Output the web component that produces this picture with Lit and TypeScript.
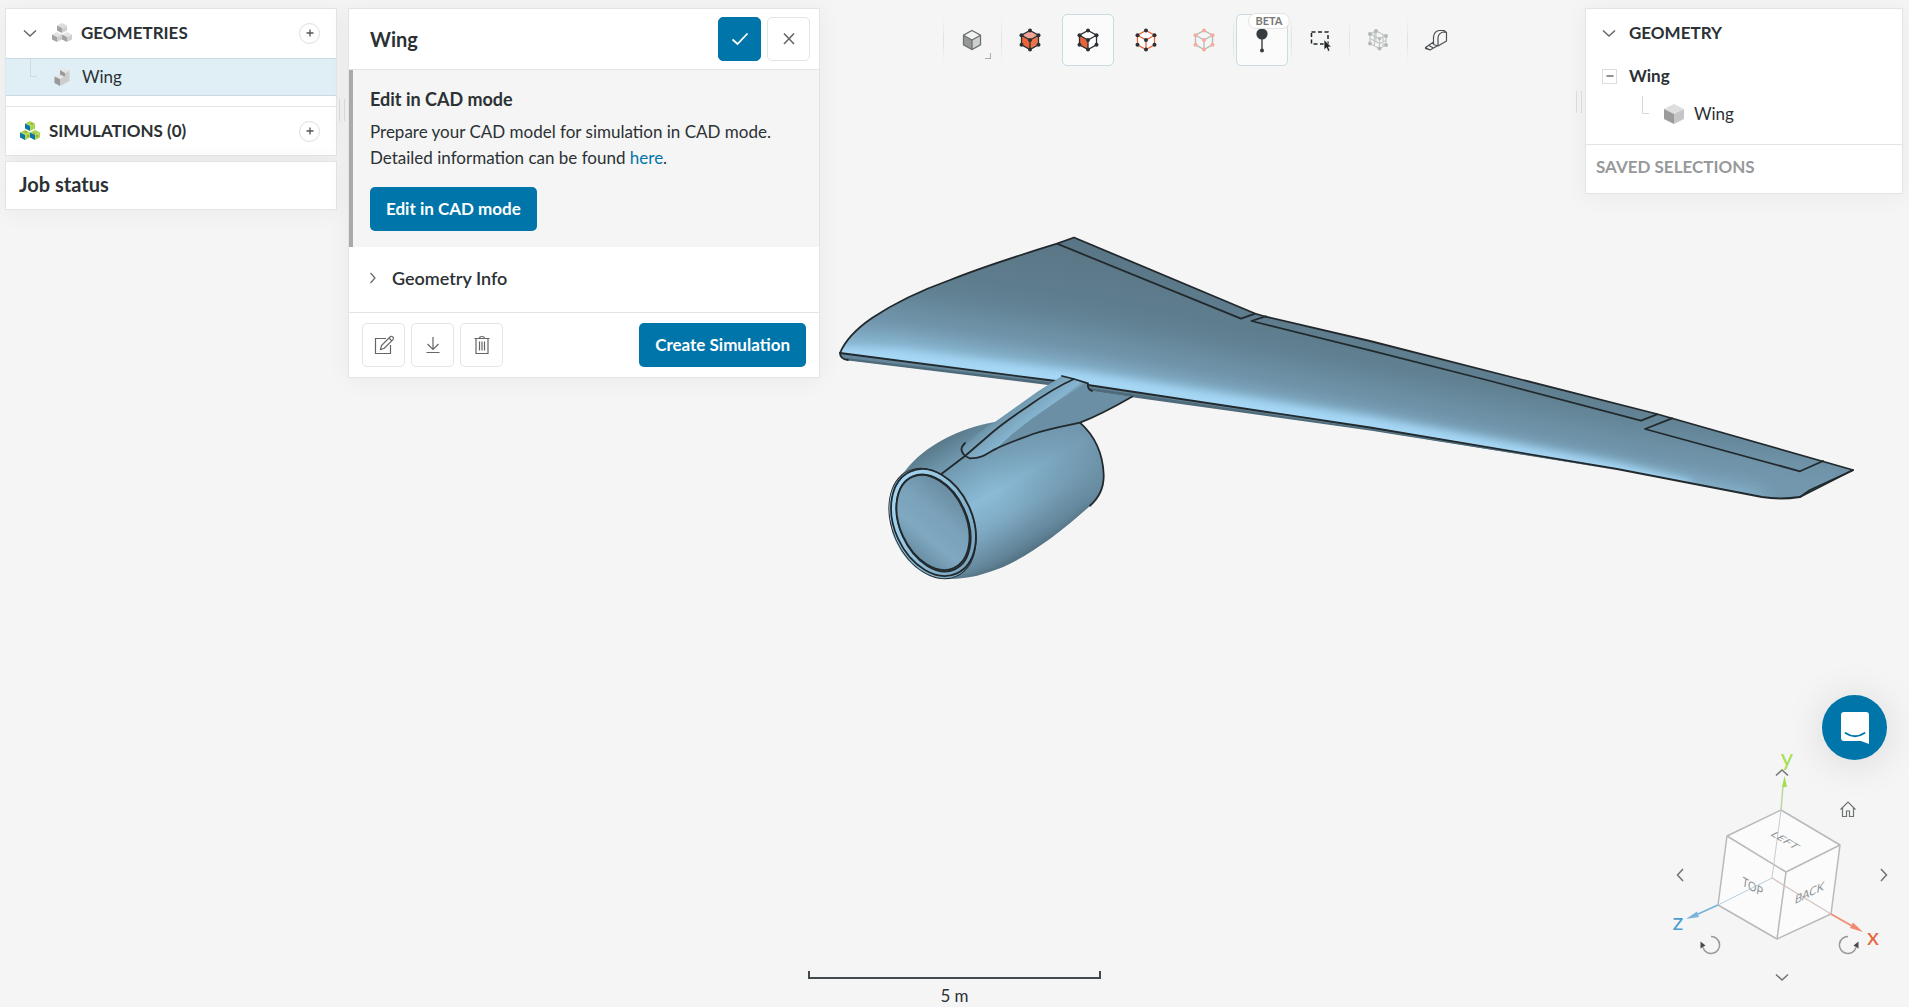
import { LitElement, html, css, svg, nothing } from "lit";
import { customElement, property } from "lit/decorators.js";

const isoCube = (cx: number, cy: number, s: number, top: string, left: string, right: string) => {
  const h = s / 2;
  return svg`
    <path fill=${top} d="M${cx} ${cy - s}L${cx + s} ${cy - h}L${cx} ${cy}L${cx - s} ${cy - h}Z"/>
    <path fill=${left} d="M${cx - s} ${cy - h}L${cx} ${cy}V${cy + s}L${cx - s} ${cy + h}Z"/>
    <path fill=${right} d="M${cx + s} ${cy - h}L${cx} ${cy}V${cy + s}L${cx + s} ${cy + h}Z"/>`;
};

const cubeDots = [[12, 2.5], [20.5, 7.2], [20.5, 16.8], [12, 21.5], [3.5, 16.8], [3.5, 7.2], [12, 12]];

const toolCube = (top: string, left: string, right: string, edge: string, dot: string) => svg`
  <g stroke="none">
    <path fill=${top} d="M12 2.5L20.5 7.2L12 12L3.5 7.2Z"/>
    <path fill=${left} d="M3.5 7.2L12 12V21.5L3.5 16.8Z"/>
    <path fill=${right} d="M20.5 7.2L12 12V21.5L20.5 16.8Z"/>
  </g>
  <path fill="none" stroke=${edge} stroke-width="1.3" d="M12 2.5L20.5 7.2V16.8L12 21.5L3.5 16.8V7.2ZM3.5 7.2L12 12L20.5 7.2M12 12V21.5"/>
  ${dot ? cubeDots.map(([x, y]) => svg`<circle cx=${x} cy=${y} r="2" stroke="none" fill=${dot}/>`) : nothing}`;

const glyphs: Record<string, unknown> = {
  down: svg`<path stroke-width="1.500" d="M6 9.500L12 15L18 9.500"/>`,
  up: svg`<path stroke-width="1.500" d="M6 14.500L12 9L18 14.500"/>`,
  left: svg`<path stroke-width="1.500" d="M15 6L9.500 12L15 18"/>`,
  right: svg`<path stroke-width="1.500" d="M9 6L14.500 12L9 18"/>`,
  smallRight: svg`<path d="M9.500 7L14 12L9.500 17"/>`,
  plus: svg`<path stroke-width="1.300" d="M12 8.500V15.500M8.500 12H15.500"/>`,
  minus: svg`<path stroke-width="1.300" d="M8.500 12H15.500"/>`,
  check: svg`<path stroke-width="1.800" d="M4.500 12.500L9.500 17L19.500 6.500"/>`,
  close: svg`<path stroke-width="1.600" d="M7 6.500L17 17M17 6.500L7 17"/>`,
  edit: svg`<path d="M14 5.500H3.500V20.500H18.500V12"/><path d="M8.500 16.500L9.500 12.500L18.500 3.500Q19.500 2.800 20.800 4Q22 5.200 21.200 6.300L12.300 15.200ZM17 5L19.800 7.800"/>`,
  download: svg`<path d="M12 4V16M6.500 11L12 16.500L17.500 11M5.500 19.500H18.500"/>`,
  trash: svg`<path d="M4.500 5.500H19.500M6 6V20.500H18V6M9.500 5.500Q9.500 3.500 12 3.500Q14.500 3.500 14.500 5.500M9.500 8.500V17.500M12 8.500V17.500M14.500 8.500V17.500"/>`,
  home: svg`<path d="M4.500 12.500L12 5L19.500 12.500M6.500 11V19.500H10.500V14H13.500V19.500H17.500V11"/>`,
  rotateLeft: svg`<path stroke="#97999a" stroke-width="1.500" d="M12 3.500A8.500 8.500 0 1 1 4 14.500"/><path fill="#4a4a4a" stroke="none" d="M1.500 8.500V15.500L6.500 12.500Z"/>`,
  rotateRight: svg`<path stroke="#97999a" stroke-width="1.500" d="M12 3.500A8.500 8.500 0 1 0 20 14.500"/><path fill="#4a4a4a" stroke="none" d="M22.500 8.500V15.500L17.500 12.500Z"/>`,
  geometries: svg`<g stroke="none">${isoCube(12, 7, 5, "#dcdcdc", "#a3a3a3", "#cfcfcf")}${isoCube(7, 16, 5, "#e4e4e4", "#a3a3a3", "#cfcfcf")}${isoCube(17, 16, 5, "#e4e4e4", "#a3a3a3", "#cfcfcf")}</g>`,
  simulations: svg`<g stroke="none">${isoCube(12, 7, 5, "#a4d94e", "#0b74ab", "#a4d94e")}${isoCube(7, 16, 5, "#a4d94e", "#0b74ab", "#a4d94e")}${isoCube(17, 16, 5, "#a4d94e", "#0b74ab", "#a4d94e")}<g fill="#d8553a"><circle cx="14" cy="5" r=".8"/><circle cx="8" cy="13" r=".8"/><circle cx="16" cy="15" r=".8"/><circle cx="19" cy="17" r=".8"/><circle cx="10" cy="17" r=".8"/></g></g>`,
  part: svg`<g stroke="none"><path fill="#e6e6e6" d="M10 5L14 3L19.500 5.500L15 8ZM5 11.500L10 9L15 11.500L10 14Z"/><path fill="#999" d="M10 5L15 8V12L10 9.500ZM4.500 11.500L10 14V21L4.500 18Z"/><path fill="#cdcdcd" d="M19.500 5.500L15 8V11.500L10 14V21L19.500 16Z"/></g>`,
  body: svg`<g stroke="none">${isoCube(12, 12, 10, "#dedede", "#9b9b9b", "#c6c6c6")}</g>`,
  view: toolCube("#f2f3f2", "#979998", "#ccd0ce", "#6c706e", ""),
  volume: toolCube("#f5a595", "#e8643a", "#ec7448", "#2a3033", "#2a3033"),
  face: toolCube("#ffffff", "#e8643a", "#ffffff", "#2a3033", "#2a3033"),
  edge: toolCube("#fff", "#fff", "#fff", "#e8643a", "#2a3033"),
  node: toolCube("none", "none", "none", "#b4b8b8", "#f8ab9c"),
  probe: svg`<g stroke="none" fill="#363d41"><circle cx="12" cy="6" r="5.600"/><circle cx="12" cy="22.500" r="2"/><path d="M11.300 10H12.700V22H11.300Z"/></g>`,
  box: svg`<path stroke="#1f2527" stroke-width="1.500" stroke-dasharray="4 2.500" d="M3.500 4H20V16H3.500Z"/><path fill="#1f2527" stroke="#f5f5f5" stroke-width=".8" d="M16 11.500V22L18.500 19.800L20 23.500L22 22.600L20.500 19H23.500Z"/>`,
  mesh: svg`<path stroke="#c4c7c7" d="M4 6L10 3L20 8V17L13.500 20.500L4 15.500ZM4 6L13.500 10.500L20 8M13.500 10.500V20.500M8.500 4V18M17 6V19M4 10.500L13.500 15.500L20 12.500M10 3V13"/><g fill="#b4b7b8" stroke="none"><circle cx="4" cy="6" r="2"/><circle cx="10" cy="3" r="2"/><circle cx="20" cy="8" r="2"/><circle cx="4" cy="15.500" r="2"/><circle cx="13.500" cy="20.500" r="2"/><circle cx="20" cy="17" r="2"/><circle cx="13.500" cy="10.500" r="1.600"/></g>`,
  tape: svg`<path stroke="#4b5052" stroke-width="1.200" stroke-linejoin="round" d="M9.500 16.500V9Q10 3.500 15 2.500H20L22.500 4.500V13L14 18L9.500 16.500M14 18V9.500Q14.500 5.500 19 4L22.500 4.500M9.500 14L1.500 19.500L6 22L14 17.500M1.500 19.500V20.500L6 22M5 17.500L9 19.800"/>`,
};

@customElement("ui-icon")
export class UiIcon extends LitElement {
  static styles = css`
    :host { display: inline-flex; width: 24px; height: 24px; flex: none; }
    svg { width: 100%; height: 100%; fill: none; stroke: currentColor; stroke-width: 1.2; overflow: visible; }
  `;
  @property() name = "";
  render() {
    return html`<svg viewBox="0 0 24 24" aria-hidden="true">${glyphs[this.name]}</svg>`;
  }
}

@customElement("wing-scene")
export class WingScene extends LitElement {
  static styles = css`
    :host { display: block; }
    svg { display: block; width: 100%; height: 100%; }
    .line { fill: none; stroke: #22292c; stroke-width: 1.8; stroke-linejoin: round; stroke-linecap: round; }
    .bore { fill: url(#bore); }
  `;
  render() {
    const wing = "M840 353C845 341 856 329 872 318C896 302 922 290 950 280C985 266 1020 255 1057 243.700L1074 237.500L1255 313.500L1265 316.500L1370 341L1523 380L1657 414L1853 470L1800 497Q1780 500 1762 497L1617 469L1370 427.500L1088 385L1048 380Z";
    const body = "M995 422C960 428 925 445 905 471C888 485 886 510 893 535C903 562 925 580 947 579C970 579 985 574 1003 567C1030 555 1060 533 1090 505.700C1100 497 1104 488 1103.700 475C1103 455 1095 437 1080 422.700L1030 405Z";
    return html`<svg viewBox="0 0 1909 1007" role="img" aria-label="Wing with engine">
      <defs>
        <clipPath id="wing"><path d=${wing}/></clipPath>
        <clipPath id="engine"><path d=${body}/></clipPath>
        <linearGradient id="wingBase" gradientUnits="userSpaceOnUse" x1="1130" y1="250" x2="1108" y2="392">
          <stop offset="0" stop-color="#5a7686"/><stop offset=".55" stop-color="#608091"/><stop offset="1" stop-color="#6f94aa"/>
        </linearGradient>
        <linearGradient id="bodyFill" gradientUnits="userSpaceOnUse" x1="958" y1="430" x2="1035" y2="560">
          <stop offset="0" stop-color="#587888"/><stop offset=".14" stop-color="#6c93a9"/><stop offset=".48" stop-color="#8bbbd7"/>
          <stop offset=".66" stop-color="#7faac4"/><stop offset=".86" stop-color="#64879b"/><stop offset="1" stop-color="#4e6b7b"/>
        </linearGradient>
        <linearGradient id="aft" gradientUnits="userSpaceOnUse" x1="1000" y1="500" x2="1100" y2="440">
          <stop offset="0" stop-color="#64879b" stop-opacity="0"/><stop offset="1" stop-color="#64879b" stop-opacity=".7"/>
        </linearGradient>
        <linearGradient id="bore" gradientUnits="userSpaceOnUse" x1="915" y1="480" x2="955" y2="565">
          <stop offset="0" stop-color="#64879a"/><stop offset=".4" stop-color="#7aa2ba"/><stop offset=".65" stop-color="#7fa9c1"/><stop offset="1" stop-color="#5f8196"/>
        </linearGradient>
        <linearGradient id="ring" gradientUnits="userSpaceOnUse" x1="895" y1="550" x2="965" y2="490">
          <stop offset="0" stop-color="#a3d5f2"/><stop offset="1" stop-color="#7ba7c1"/>
        </linearGradient>
        <linearGradient id="strut" gradientUnits="userSpaceOnUse" x1="1000" y1="415" x2="1024" y2="445">
          <stop offset="0" stop-color="#6b91a7"/><stop offset=".3" stop-color="#7ba6be"/><stop offset=".62" stop-color="#86b5d0"/><stop offset=".75" stop-color="#6d92a7"/><stop offset="1" stop-color="#698da1"/>
        </linearGradient>
        <filter id="b24" x="-20%" y="-40%" width="140%" height="180%"><feGaussianBlur stdDeviation="18"/></filter>
        <filter id="b12" x="-20%" y="-40%" width="140%" height="180%"><feGaussianBlur stdDeviation="9"/></filter>
        <filter id="b4" x="-20%" y="-40%" width="140%" height="180%"><feGaussianBlur stdDeviation="4"/></filter>
      </defs>
      <path fill="#64869a" d="M840 353Q840 359 848 360L1048 384L1134 396L1370 430L1617 470L1370 427L1088 385Z"/>
      <path fill="#4f6b7a" d="M846 358L1048 382L1134 394L1370 429L1617 469.500L1370 430.500L1134 397.500L1048 385L848 360.500Z"/>
      <path fill="url(#wingBase)" d=${wing}/>
      <g clip-path="url(#wing)">
        <path filter="url(#b24)" fill="#7398ae" d="M800 300L900 310L1080 335L1370 392L1650 450L1860 465V530L1762 520L1370 450L800 380Z"/>
        <path filter="url(#b12)" fill="#8cbcd8" opacity=".85" d="M810 330L900 335L1080 362L1370 414L1650 470L1762 492V520L1370 450L800 380Z"/>
        <path filter="url(#b4)" fill="#a6d8f6" d="M800 345L900 349L1088 373L1370 417L1617 463L1690 481V492L1370 434L1088 391L800 356Z"/>
      </g>
      <path class="line" d=${wing}/>
      <path class="line" d="M840 353Q840 359 848 360M1057 243.700L1241 318.700L1255 313.700M1265.500 316.300L1251.500 321L1370 350.300L1486.700 380L1641 420.700L1657 414.300M1672 418.300L1645 429L1800 471.300L1823 461M1853 470.300L1810 490L1800 497"/>
      <path fill="url(#bodyFill)" d=${body}/>
      <path fill="url(#aft)" d=${body}/>
      <g clip-path="url(#engine)"><path filter="url(#b4)" fill="none" stroke="#4c6777" stroke-width="7" d="M946 583C970 582 990 577 1006 570C1033 558 1062 538 1094 508"/></g>
      <path fill="url(#strut)" d="M1062 376L1088 383.300Q1088 388 1091.700 391L1132 396.700L1100 413L1080 422.700C1064 426 1048 429 1033 434C1020 439 1008 443 997 448.300C990 452 987 457 970 458.300C965 457 960 452 962 447C964 444 967 443 971 440C978 433 985 428 995 422L1037 392C1048 385 1054 381 1062 376Z"/>
      <path fill="#6b8fa4" d="M1088 384Q1088 389 1092 391L1132 397L1100 413L1080 422.500C1050 428 1020 437 997 448C1020 425 1055 402 1085 384Z"/>
      <path class="line" d="M1062 376L1074 379L1088 383.300Q1087 389 1092 391M1132 396.700Q1102 414 1080 422.700C1064 426 1048 429 1033 434C1020 439 1008 443 997 448.300C988 452 985 458 970 458.300C965 457 960 452 962 447Q963 445 965 443M1074 379C1056 387 1041 397 1027 407C1012 417 998 427 987 437L965 456L940 475M1080 422.700C1096 437 1103 455 1103.700 475C1104 488 1100 497 1090 505.700"/>
      <ellipse class="line" cx="932.500" cy="523.500" rx="57.500" ry="39.500" transform="rotate(65.400 932.500 523.500)"/>
      <ellipse cx="932.500" cy="523.500" rx="57.500" ry="39.500" transform="rotate(65.400 932.500 523.500)" fill="url(#ring)"/>
      <ellipse class="line" cx="933.500" cy="522.500" rx="56" ry="39" transform="rotate(65.400 933.500 522.500)"/>
      <ellipse class="line" cx="933.500" cy="523" rx="51" ry="33.500" transform="rotate(65.400 933.500 523)"/>
      <ellipse class="line bore" cx="933" cy="522.500" rx="50" ry="33" transform="rotate(65.400 933 522.500)"/>
    </svg>`;
  }
}

@customElement("view-cube")
export class ViewCube extends LitElement {
  static styles = css`
    :host { display: block; position: relative; width: 220px; height: 240px; font-family: Lato, "Open Sans", sans-serif; }
    .drawing { position: absolute; inset: 0; width: 100%; height: 100%; overflow: visible; }
    .face { font-size: 13px; fill: #8f9394; text-anchor: middle; }
    .axis { font-size: 24px; text-anchor: middle; }
    button { position: absolute; width: 24px; height: 24px; padding: 0; border: 0; background: none; color: #707374; display: flex; }
    .up { left: 100px; top: 11px; }
    .down { left: 100px; top: 215px; }
    .left { left: -2px; top: 113px; }
    .right { left: 202px; top: 113px; }
    .home { left: 166px; top: 47px; }
    .ccw { left: 29px; top: 183px; }
    .cw { left: 166px; top: 183px; }
  `;
  render() {
    return html`
      <svg class="drawing" viewBox="0 0 220 240" aria-label="View cube">
        <path fill="#fbfbfb" stroke="#b7b9ba" stroke-width="1.500" stroke-linejoin="round" d="M111 60L170 95L161 164L107 189L48 155L57 86Z"/>
        <path fill="none" stroke="#b7b9ba" stroke-width="1.500" stroke-linejoin="round" d="M57 86L116 122L170 95M116 122L107 189"/>
        <path fill="none" stroke="#c5ccd0" d="M102 128L111 60"/>
        <path fill="none" stroke="#b5d0e0" d="M102 128L48 155"/>
        <path fill="none" stroke="#d5c4c0" stroke-width="1.300" d="M102 128L161 164"/>
        <path fill="none" stroke="#b9d9a0" stroke-width="1.500" d="M111 60L113 36"/>
        <path fill="#a5de4c" d="M114.500 26L117 37H112Z"/>
        <path fill="none" stroke="#77b2d8" stroke-width="1.800" d="M48 155L27 164.500"/>
        <path fill="#7ab4da" d="M16 169L27 161.500L29 167Z"/>
        <path fill="none" stroke="#f28c75" stroke-width="1.800" d="M161 164L182 176"/>
        <path fill="#f08a72" d="M193 182L180 178L183 172.500Z"/>
        <text class="face" transform="matrix(.85 .5 -.7 .35 112 92)">LEFT</text>
        <text class="face" transform="matrix(.8 .46 -.12 .95 82 141)">TOP</text>
        <text class="face" transform="matrix(.85 -.42 -.12 .95 139 147)">BACK</text>
        <text class="axis" x="117" y="16" fill="#a5de4c">y</text>
        <text class="axis" x="8" y="180" fill="#4a9dcf">z</text>
        <text class="axis" x="203" y="195" fill="#e8643a">x</text>
      </svg>
      ${[["up", "up"], ["down", "down"], ["left", "left"], ["right", "right"], ["home", "home"], ["ccw", "rotateLeft"], ["cw", "rotateRight"]].map(
        ([cls, icon]) => html`<button class=${cls} aria-label=${icon}><ui-icon name=${icon}></ui-icon></button>`
      )}`;
  }
}

@customElement("app-root")
export class AppRoot extends LitElement {
  static styles = css`
    :host {
      display: block; position: relative; min-height: 100vh; background: #f5f5f5; color: #2b3134;
      font: 400 17px/26px Lato, "Open Sans", sans-serif; --line: #e3e4e4; --blue: #0075aa;
    }
    * { box-sizing: border-box; }
    h2, h3, p, ul { margin: 0; padding: 0; }
    ul { list-style: none; }
    button { font: inherit; color: inherit; border: 0; background: none; padding: 0; }
    a { color: var(--blue); text-decoration: none; }
    wing-scene { position: absolute; inset: 0; }
    .shell { position: relative; min-height: 100vh; display: flex; flex-direction: column; justify-content: space-between; }
    .top { display: grid; grid-template-columns: 332px 483px minmax(0, 1fr) 318px; align-items: start; padding: 8px 6px 0 5px; }
    .side { display: flex; flex-direction: column; gap: 5px; }
    .dialog { margin-left: 11px; }
    .card { position: relative; background: #fff; border: 1px solid var(--line); box-shadow: 0 2px 24px rgba(0, 0, 0, .05); }
    .grip { position: absolute; top: 90px; width: 6px; height: 22px; border: solid #d8dcde; border-width: 0 1px; }
    .side .grip { right: -9px; }
    .props .grip { left: -10px; top: 82px; }
    .head { display: flex; align-items: center; height: 49px; font-weight: 700; }
    .head .label { flex: 1; padding-bottom: 1px; }
    .toggle { display: flex; color: #666; }
    .add { width: 21px; height: 21px; margin-right: 16px; border: 1px solid #dcdede; border-radius: 50%; display: flex; align-items: center; justify-content: center; color: #555; }
    .geometries { padding-left: 12px; padding-bottom: 1px; }
    .geometries .kind { margin: 0 7px 0 8px; }
    .simulations { padding-left: 12px; border-top: 1px solid var(--line); }
    .simulations .kind { margin-right: 7px; }
    .row { display: flex; align-items: center; height: 38px; }
    .selected { background: #e0eef5; border: solid #c6dbe5; border-width: 1px 0; margin-bottom: 10px; padding-left: 24px; }
    .selected .kind { margin: 0 8px 0 13px; }
    .branch { width: 7px; height: 18px; border: solid #d4d8da; border-width: 0 0 1px 1px; margin-bottom: 18px; }
    .job { height: 49px; display: flex; align-items: center; padding: 0 13px 3px; font-size: 20px; font-weight: 700; }

    .dialog-head { display: flex; align-items: center; gap: 6px; height: 61px; padding: 0 9px 0 21px; border-bottom: 1px solid var(--line); }
    .dialog-head h2 { flex: 1; font-size: 20px; font-weight: 700; }
    .square { width: 43px; height: 44px; border: 1px solid var(--line); border-radius: 5px; display: grid; place-items: center; color: #666; background: #fff; }
    .primary { background: var(--blue); border-color: var(--blue); color: #fff; }
    .callout { background: #f5f5f5; border-left: 4px solid #aaa; padding: 16px 17px; height: 177px; }
    .callout h3 { font-size: 18px; font-weight: 700; margin-bottom: 7px; }
    .wide { height: 44px; border-radius: 5px; padding: 0 16px; font-weight: 700; background: var(--blue); color: #fff; }
    .callout .wide { margin-top: 16px; }
    .info { width: 100%; height: 65px; display: flex; align-items: center; gap: 7px; padding: 0 12px 4px; font-size: 18px; font-weight: 600; }
    .info ui-icon { color: #666; }
    .actions { display: flex; align-items: center; gap: 6px; height: 65px; padding: 0 13px 1px; border-top: 1px solid var(--line); }
    .actions .wide { margin-left: auto; }

    .tools { display: flex; justify-content: center; gap: 6px; padding: 6px 0 0 2px; }
    .tool { position: relative; width: 52px; height: 52px; border: 1px solid transparent; border-radius: 5px; display: grid; place-items: center; }
    .tool.on { background: #fbfbfb; border-color: #c9dbe3; }
    .sep::before { content: ""; position: absolute; left: -4px; top: 2px; height: 46px; width: 1px; background: linear-gradient(transparent, #dfe0e0, transparent); }
    .corner { position: absolute; right: 6px; bottom: 6px; width: 6px; height: 6px; border: solid #a9adae; border-width: 0 1px 1px 0; }
    .beta { position: absolute; top: -2px; right: -3px; height: 16px; padding: 0 6px; border-radius: 8px; border: 1px solid var(--line); background: #fff; color: #777; font-size: 11px; line-height: 14px; font-weight: 700; }

    .props .head { padding-left: 11px; gap: 8px; height: 48px; }
    .node { padding-left: 16px; gap: 12px; font-weight: 700; }
    .collapse { width: 15px; height: 15px; border: 1px solid #dcdede; display: flex; align-items: center; justify-content: center; color: #555; }
    .leaf { padding-left: 56px; margin-bottom: 11px; }
    .leaf .kind { margin: 0 8px 0 13px; }
    .saved { border-top: 1px solid var(--line); height: 49px; padding: 9px 10px; color: #97999a; font-size: 17px; font-weight: 700; }

    .bottom { display: grid; grid-template-columns: 1fr auto 1fr; align-items: end; }
    .scale { grid-column: 2; width: 293px; text-align: center; height: 36px; }
    .scale::before { content: ""; display: block; height: 6px; border: 2px solid #41494d; border-top: 0; }
    .scale span { display: block; padding-top: 5px; line-height: 24px; }
    .corner-tools { justify-self: end; display: flex; flex-direction: column; align-items: flex-end; padding: 0 19px 17px 0; }
    .chat { width: 65px; height: 65px; margin: 0 3px -10px 0; border-radius: 50%; background: var(--blue); display: grid; place-items: center; box-shadow: 0 3px 40px rgba(0, 0, 0, .12); }
    .chat svg { width: 30px; height: 32px; }
  `;

  render() {
    const tools = [
      ["view", "Render mode", "sep"], ["volume", "Volume selection", "sep"], ["face", "Face selection", "on"],
      ["edge", "Edge selection", ""], ["node", "Node selection", ""], ["probe", "Probe point", "on sep"],
      ["box", "Box selection", "sep"], ["mesh", "Mesh", "sep"], ["tape", "Measure", "sep"],
    ];
    return html`
      <wing-scene></wing-scene>
      <div class="shell">
        <div class="top">
          <nav class="side">
            <section class="card">
              <div class="head geometries">
                <button class="toggle" aria-label="Collapse geometries"><ui-icon name="down"></ui-icon></button>
                <ui-icon class="kind" name="geometries"></ui-icon>
                <span class="label">GEOMETRIES</span>
                <button class="add" aria-label="Add geometry"><ui-icon name="plus"></ui-icon></button>
              </div>
              <div class="row selected"><i class="branch"></i><ui-icon class="kind" name="part"></ui-icon><span>Wing</span></div>
              <div class="head simulations">
                <ui-icon class="kind" name="simulations"></ui-icon>
                <span class="label">SIMULATIONS (0)</span>
                <button class="add" aria-label="Add simulation"><ui-icon name="plus"></ui-icon></button>
              </div>
              <i class="grip"></i>
            </section>
            <section class="card job">Job status</section>
          </nav>

          <section class="card dialog">
            <header class="dialog-head">
              <h2>Wing</h2>
              <button class="square primary" aria-label="Apply"><ui-icon name="check"></ui-icon></button>
              <button class="square" aria-label="Close"><ui-icon name="close"></ui-icon></button>
            </header>
            <div class="callout">
              <h3>Edit in CAD mode</h3>
              <p>Prepare your CAD model for simulation in CAD mode. Detailed information can be found <a href="#cad">here</a>.</p>
              <button class="wide">Edit in CAD mode</button>
            </div>
            <button class="info"><ui-icon name="smallRight"></ui-icon>Geometry Info</button>
            <footer class="actions">
              <button class="square" aria-label="Rename"><ui-icon name="edit"></ui-icon></button>
              <button class="square" aria-label="Download"><ui-icon name="download"></ui-icon></button>
              <button class="square" aria-label="Delete"><ui-icon name="trash"></ui-icon></button>
              <button class="wide">Create Simulation</button>
            </footer>
          </section>

          <div class="tools" role="toolbar">
            ${tools.map(([icon, label, cls]) => html`
              <button class="tool ${cls}" aria-label=${label}>
                <ui-icon name=${icon}></ui-icon>
                ${icon === "view" ? html`<i class="corner"></i>` : nothing}
                ${icon === "probe" ? html`<span class="beta">BETA</span>` : nothing}
              </button>`)}
          </div>

          <section class="card props">
            <i class="grip"></i>
            <div class="head">
              <button class="toggle" aria-label="Collapse geometry"><ui-icon name="down"></ui-icon></button>
              <span class="label">GEOMETRY</span>
            </div>
            <ul>
              <li class="row node"><button class="collapse" aria-label="Collapse"><ui-icon name="minus"></ui-icon></button>Wing</li>
              <li class="row leaf"><i class="branch"></i><ui-icon class="kind" name="body"></ui-icon><span>Wing</span></li>
            </ul>
            <h3 class="saved">SAVED SELECTIONS</h3>
          </section>
        </div>

        <div class="bottom">
          <div class="scale"><span>5 m</span></div>
          <div class="corner-tools">
            <button class="chat" aria-label="Open chat">
              <svg viewBox="0 0 30 32"><path fill="#fff" d="M4 0H26Q29 0 29 3V32L21 29H4Q1 29 1 26V3Q1 0 4 0Z"/><path fill="none" stroke="#0075aa" stroke-width="1.800" stroke-linecap="round" d="M5.500 21Q15 27.500 24.500 21"/></svg>
            </button>
            <view-cube></view-cube>
          </div>
        </div>
      </div>`;
  }
}
